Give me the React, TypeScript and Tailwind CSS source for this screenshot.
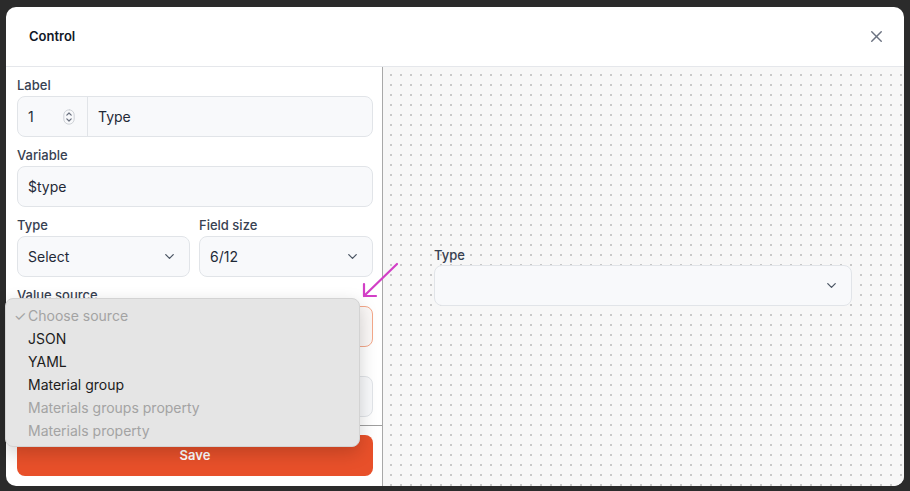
import { X, ChevronDown } from "lucide-react";

const Label = ({ children }: { children: React.ReactNode }) => (
  <div className="h-[18px] mb-[2px] text-[13px] leading-[18px] font-medium text-[#374151]">{children}</div>
);

const Select = ({ value, className = "" }: { value?: string; className?: string }) => (
  <div
    className={`h-[41px] rounded-lg border border-[#e1e4e8] bg-[#f8f9fb] flex items-center justify-between pl-[10px] pr-[12px] text-[14px] text-[#1f2937] ${className}`}
  >
    <span>{value}</span>
    <ChevronDown size={15} strokeWidth={2} className="text-[#4b5563]" />
  </div>
);

const Spinner = () => (
  <svg width="12" height="16" viewBox="0 0 12 16" fill="none" stroke="#6b7280" strokeWidth="1.2" strokeLinecap="round" strokeLinejoin="round">
    <rect x="0.8" y="0.8" width="10.4" height="14.4" rx="5.2" strokeWidth="0.8" stroke="#c4c8ce" />
    <path d="M3.8 6.2 6 4 8.2 6.2" />
    <path d="M3.8 9.8 6 12 8.2 9.8" />
  </svg>
);

const options = [
  { text: "Choose source", muted: true, checked: true },
  { text: "JSON" },
  { text: "YAML" },
  { text: "Material group" },
  { text: "Materials groups property", muted: true },
  { text: "Materials property", muted: true },
];

export default function App() {
  return (
    <div className="relative h-screen bg-[#2b2b2b] pt-[7px] pl-[6px] font-['Inter',sans-serif] overflow-hidden">
      <div className="w-[898px] h-[479px] bg-white rounded-[10px] flex flex-col overflow-hidden">
        {/* Header */}
        <div className="h-[60px] shrink-0 flex items-center justify-between pl-[23px] pr-[18px] border-b border-[#e5e7eb]">
          <h2 className="text-[13px] font-semibold text-[#111827]">Control</h2>
          <X size={19} strokeWidth={1.8} className="text-[#6b7280]" />
        </div>

        <div className="flex flex-1 min-h-0">
          {/* Form */}
          <div className="w-[377px] shrink-0 flex flex-col border-r border-[#a8a8a8]">
            <div className="flex-1 pl-[11px] pr-[9px] pt-[9px] flex flex-col gap-[9px]">
              <div>
                <Label>Label</Label>
                <div className="h-[41px] rounded-lg border border-[#e1e4e8] bg-[#f8f9fb] flex text-[14px] text-[#1f2937]">
                  <div className="w-[70px] flex items-center justify-between pl-[10px] pr-[12px] border-r border-[#e1e4e8]">
                    <span>1</span>
                    <Spinner />
                  </div>
                  <div className="flex items-center pl-[10px]">Type</div>
                </div>
              </div>
              <div>
                <Label>Variable</Label>
                <div className="h-[41px] rounded-lg border border-[#e1e4e8] bg-[#f8f9fb] flex items-center pl-[10px] text-[14px] text-[#1f2937]">
                  $type
                </div>
              </div>
              <div className="flex gap-[9px]">
                <div className="w-[173px]">
                  <Label>Type</Label>
                  <Select value="Select" />
                </div>
                <div className="flex-1">
                  <Label>Field size</Label>
                  <Select value="6/12" />
                </div>
              </div>
              <div>
                <Label>Value source</Label>
                <Select className="border-[#f4a88a] bg-[#fbf8f7]" />
              </div>
              <div>
                <div className="h-[20px]" />
                <Select />
              </div>
            </div>
            <div className="h-[61px] shrink-0 border-t border-[#9e9e9e] pl-[11px] pr-[9px] pt-[9px]">
              <button className="w-full h-[41px] rounded-lg bg-[#e8502a] text-white text-[13px] font-semibold">
                Save
              </button>
            </div>
          </div>

          {/* Preview */}
          <div className="flex-1 bg-[#f7f7f7] bg-[radial-gradient(#c9c9c9_0.8px,transparent_1px)] bg-[size:10px_10px] bg-[position:3px_3px] flex flex-col justify-center pl-[51px] pr-[52px] pb-[1px]">
            <div className="h-[18px] mb-[1px] text-[13px] leading-[18px] font-medium text-[#374151]">Type</div>
            <Select />
          </div>
        </div>
      </div>

      {/* Open native select menu */}
      <div className="absolute left-[5px] top-[298px] w-[355px] h-[149px] rounded-lg bg-[#e5e5e5] border border-[#d3d3d3] shadow-[0_6px_18px_rgba(0,0,0,0.18)] pt-[5px] font-['Inter',sans-serif]">
        {options.map((o) => (
          <div
            key={o.text}
            className={`h-[23px] flex items-center text-[14px] ${o.muted ? "text-[#a3a3a3]" : "text-[#1c1c1c]"}`}
          >
            <span className="w-[22px] pl-[8px] text-[14px]">{o.checked ? "✓" : ""}</span>
            <span>{o.text}</span>
          </div>
        ))}
      </div>

      {/* Annotation arrow */}
      <svg className="absolute left-[358px] top-[258px]" width="44" height="44" viewBox="0 0 44 44" fill="none" stroke="#d23fc6" strokeWidth="2.2" strokeLinecap="round" strokeLinejoin="round">
        <path d="M39 6 6 38" />
        <path d="M6 26V38H18" />
      </svg>
    </div>
  );
}
